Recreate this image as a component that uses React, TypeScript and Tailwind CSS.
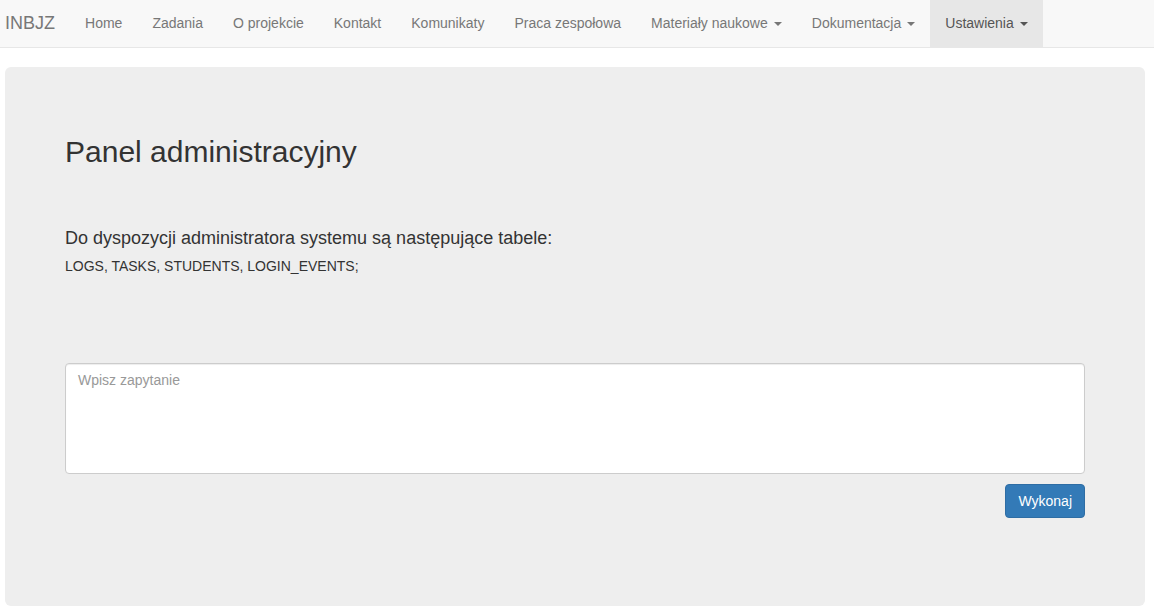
import React from "react";

const links = [
    { label: "Home" },
    { label: "Zadania" },
    { label: "O projekcie" },
    { label: "Kontakt" },
    { label: "Komunikaty" },
    { label: "Praca zespołowa" },
    { label: "Materiały naukowe", dropdown: true },
    { label: "Dokumentacja", dropdown: true },
    { label: "Ustawienia", dropdown: true, active: true },
];

function Caret() {
    return (
        <span className="inline-block ml-[6px] align-middle w-0 h-0 border-t-[4px] border-t-current border-x-[4px] border-x-transparent" />
    );
}

export default function App() {
    return (
        <div className="min-h-screen bg-white text-[14px] text-[#333]" style={{ fontFamily: '"Liberation Sans", Arial, sans-serif' }}>
            <nav className="h-[48px] bg-[#f8f8f8] border-b border-[#e7e7e7] flex items-stretch">
                <a className="flex items-center pl-[5px] pr-[15px] text-[18px] text-[#777]">INBJZ</a>
                <ul className="flex items-stretch">
                    {links.map((l) => (
                        <li key={l.label}>
                            <a
                                className={`h-full flex items-center px-[15px] ${
                                    l.active ? "bg-[#e7e7e7] text-[#555]" : "text-[#777]"
                                }`}
                            >
                                {l.label}
                                {l.dropdown && <Caret />}
                            </a>
                        </li>
                    ))}
                </ul>
            </nav>

            <div className="mt-[19px] ml-[5px] w-[1140px] bg-[#eee] rounded-[6px] px-[60px] pt-[48px] pb-[88px] flex flex-col">
                <h2 className="mt-[20px] text-[30px] leading-[33px] font-normal">Panel administracyjny</h2>
                <h4 className="mt-[60px] text-[18px] leading-[20px]">Do dyspozycji administratora systemu są następujące tabele:</h4>
                <p className="mt-[8px] leading-[20px] text-[14px]">LOGS, TASKS, STUDENTS, LOGIN_EVENTS;</p>

                <textarea
                    className="mt-[87px] h-[111px] w-full bg-white border border-[#ccc] rounded-[4px] px-[12px] py-[6px] text-[14px] leading-[20px] text-[#555] placeholder:text-[#999] resize-none outline-none shadow-[inset_0_1px_1px_rgba(0,0,0,0.075)]"
                    placeholder="Wpisz zapytanie"
                />
                <div className="mt-[10px] flex justify-end">
                    <button className="h-[34px] px-[12px] bg-[#337ab7] border border-[#2e6da4] rounded-[4px] text-white text-[14px]">
                        Wykonaj
                    </button>
                </div>
            </div>
        </div>
    );
}
